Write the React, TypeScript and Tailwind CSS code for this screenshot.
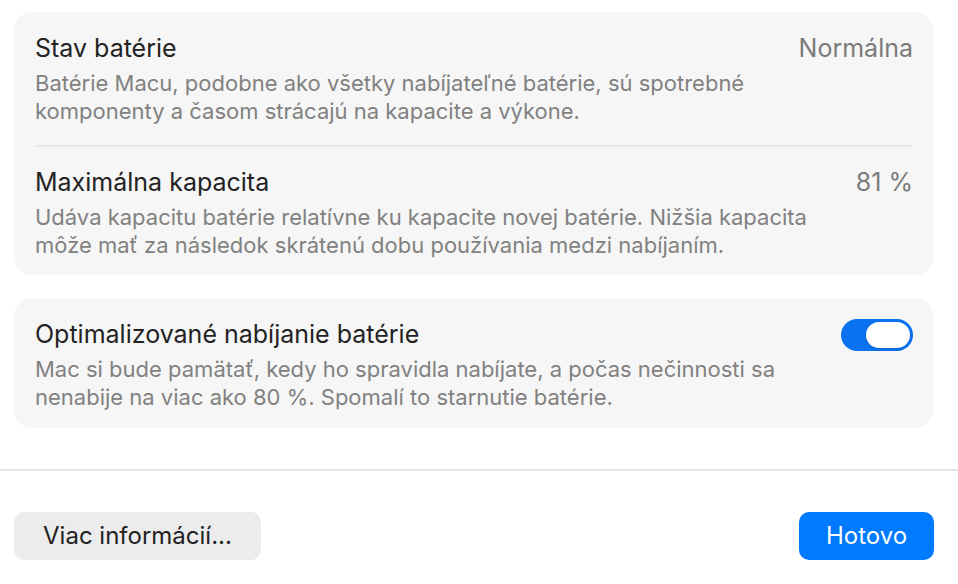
const rows = [
  {
    title: "Stav batérie",
    value: "Normálna",
    text: ["Batérie Macu, podobne ako všetky nabíjateľné batérie, sú spotrebné", "komponenty a časom strácajú na kapacite a výkone."],
  },
  {
    title: "Maximálna kapacita",
    value: "81 %",
    text: ["Udáva kapacitu batérie relatívne ku kapacite novej batérie. Nižšia kapacita", "môže mať za následok skrátenú dobu používania medzi nabíjaním."],
  },
];

const Row = ({ title, value, text, right }: { title: string; value?: string; text: string[]; right?: React.ReactNode }) => (
  <div>
    <div className="flex items-center justify-between h-[30px]">
      <span className="text-[25px] text-[#232323]">{title}</span>
      {value && <span className="text-[25px] text-[#7b7b7b]">{value}</span>}
      {right}
    </div>
    <div className="mt-[5px] text-[22px] leading-[28px] text-[#818181] whitespace-nowrap">
      {text.map((t, i) => (
        <div key={i}>{t}</div>
      ))}
    </div>
  </div>
);

const Toggle = () => (
  <div className="w-[72px] h-[32px] rounded-full bg-[#0a72f0] p-[3px] flex justify-end">
    <div className="w-[44px] h-[26px] rounded-full bg-white shadow-sm"></div>
  </div>
);

export default function App() {
  return (
    <div className="w-[958px] h-[584px] bg-white font-['Inter',sans-serif] overflow-hidden">
      <div className="pl-[14px] pr-[25px] pt-[12px]">
        <div className="rounded-[18px] bg-[#f6f6f6] pl-[21px] pr-[20px] pt-[22px] pb-[16px]">
          <Row {...rows[0]} />
          <div className="h-[2px] bg-[#e8e8e8] mt-[20px] mb-[21px]"></div>
          <Row {...rows[1]} />
        </div>
        <div className="mt-[23px] rounded-[18px] bg-[#f6f6f6] pl-[21px] pr-[20px] pt-[22px] pb-[17px]">
          <Row
            title="Optimalizované nabíjanie batérie"
            text={["Mac si bude pamätať, kedy ho spravidla nabíjate, a počas nečinnosti sa", "nenabije na viac ako 80 %. Spomalí to starnutie batérie."]}
            right={<Toggle />}
          />
        </div>
      </div>
      <div className="mt-[41px] h-[2px] bg-[#e5e5e5]"></div>
      <div className="flex justify-between pl-[14px] pr-[24px] mt-[41px]">
        <button className="h-[48px] w-[247px] rounded-[10px] bg-[#ececec] text-[24px] text-[#222]">Viac informácií...</button>
        <button className="h-[48px] w-[135px] rounded-[10px] bg-[#007aff] text-[24px] text-white">Hotovo</button>
      </div>
    </div>
  );
}
